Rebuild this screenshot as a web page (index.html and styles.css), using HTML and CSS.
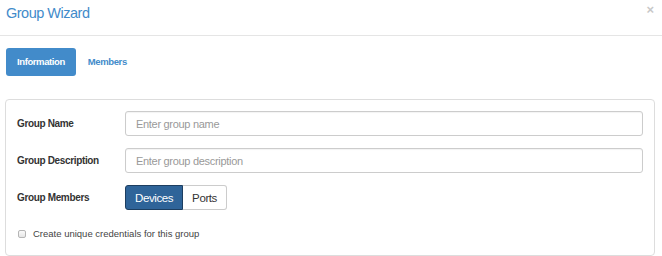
FILE: index.html
```html
<!DOCTYPE html>
<html lang="en">

<head>
    <meta charset="UTF-8">
    <meta name="viewport" content="width=device-width, initial-scale=1.0">
    <title>Group Wizard</title>
    <link rel="stylesheet" href="styles.css">
</head>

<body>
    <div class="modal-header">
        <h4 class="modal-title">Group Wizard</h4>
        <button class="close" type="button">&times;</button>
    </div>

    <div class="modal-body">
        <ul class="nav-pills">
            <li class="active"><a href="#">Information</a></li>
            <li><a href="#">Members</a></li>
        </ul>

        <div class="panel">
            <div class="form-row">
                <label for="groupName">Group Name</label>
                <input type="text" id="groupName" placeholder="Enter group name">
            </div>
            <div class="form-row">
                <label for="groupDesc">Group Description</label>
                <input type="text" id="groupDesc" placeholder="Enter group description">
            </div>
            <div class="form-row">
                <label>Group Members</label>
                <div class="btn-group">
                    <button class="btn active" type="button">Devices</button>
                    <button class="btn" type="button">Ports</button>
                </div>
            </div>
            <label class="checkbox">
                <input type="checkbox">
                Create unique credentials for this group
            </label>
        </div>
    </div>
</body>

</html>
```

FILE: styles.css
```css
* {
    padding: 0;
    margin: 0;
    box-sizing: border-box;
}

body {
    font-family: "Liberation Sans", Arial, sans-serif;
    color: #333;
    background-color: #fff;
}

.modal-header {
    display: flex;
    align-items: flex-start;
    justify-content: space-between;
    height: 36px;
    padding: 5px 8px 0 6px;
    border-bottom: 1px solid #e5e5e5;
}

.modal-title {
    font-size: 14.5px;
    font-weight: normal;
    color: #428bca;
    letter-spacing: -0.5px;
}

.close {
    border: 0;
    background: none;
    color: #c8c8c8;
    font-family: "Liberation Sans", Arial, sans-serif;
    font-size: 13px;
    font-weight: bold;
    line-height: 12px;
    margin-top: -1px;
    cursor: pointer;
}

.modal-body {
    padding: 12px 7px 0 5px;
}

.nav-pills {
    display: flex;
    list-style: none;
    margin-left: 1px;
}

.nav-pills a {
    display: block;
    height: 28px;
    padding: 0 11px;
    line-height: 28px;
    font-size: 9.5px;
    font-weight: bold;
    letter-spacing: -0.4px;
    color: #428bca;
    text-decoration: none;
    border-radius: 3px;
}

.nav-pills li + li a {
    margin-left: 1px;
}

.nav-pills .active a {
    background-color: #428bca;
    color: #fff;
}

.panel {
    margin-top: 23px;
    border: 1px solid #ddd;
    border-radius: 4px;
    padding: 11px 11px 0 11px;
    height: 157px;
}

.form-row {
    display: flex;
    align-items: center;
    margin-bottom: 12px;
}

.form-row label {
    width: 108px;
    flex-shrink: 0;
    font-size: 10px;
    font-weight: bold;
    letter-spacing: -0.35px;
    color: #333;
}

.form-row input {
    flex: 1;
    height: 25px;
    padding: 0 10px;
    border: 1px solid #ccc;
    border-radius: 3px;
    font-family: "Liberation Sans", Arial, sans-serif;
    font-size: 11px;
    letter-spacing: -0.3px;
    color: #555;
    box-shadow: inset 0 1px 1px rgba(0, 0, 0, 0.05);
}

.form-row input::placeholder {
    color: #999;
}

.btn-group {
    display: flex;
}

.btn {
    height: 25px;
    padding: 0 9px;
    border: 1px solid #ccc;
    background-color: #fff;
    color: #333;
    font-family: "Liberation Sans", Arial, sans-serif;
    font-size: 11.5px;
    letter-spacing: -0.4px;
    cursor: pointer;
}

.btn:first-child {
    border-radius: 3px 0 0 3px;
}

.btn:last-child {
    border-radius: 0 3px 3px 0;
    border-left: 0;
}

.btn.active {
    background-color: #2f6499;
    border-color: #1d3e60;
    color: #fff;
}

.checkbox {
    display: flex;
    align-items: center;
    margin-top: 18px;
    font-size: 9.5px;
    color: #444;
}

.checkbox input {
    appearance: none;
    width: 8px;
    height: 8px;
    margin: 0 7px 0 1px;
    border: 1px solid #b5b5b5;
    border-radius: 2px;
    background: linear-gradient(#fafafa, #e6e6e6);
}
```
